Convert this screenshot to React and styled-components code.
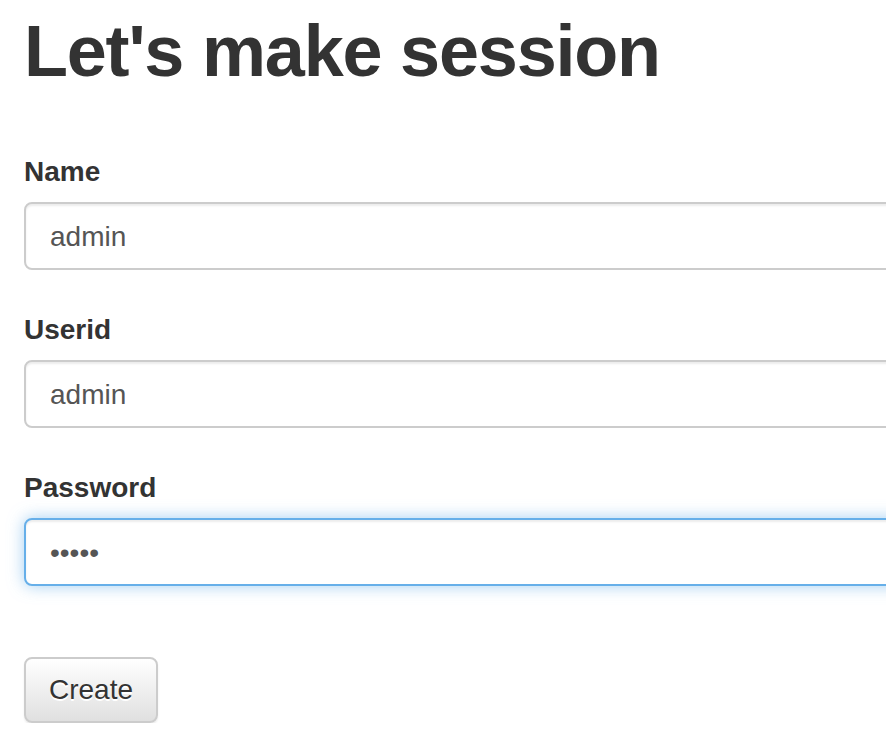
import React from "react";
import styled, { createGlobalStyle } from "styled-components";

const GlobalStyle = createGlobalStyle`
  html, body {
    margin: 0;
    padding: 0;
    background: #fff;
    overflow: hidden;
  }
  body {
    font-family: "Liberation Sans", Arial, sans-serif;
    color: #333;
  }
`;

const Page = styled.div`
  width: 1000px;
  padding: 0 24px;
`;

const Title = styled.h1`
  margin: 12px 0 61px;
  font-size: 72px;
  line-height: 79px;
  font-weight: bold;
  letter-spacing: -1.2px;
  color: #333;
`;

const Form = styled.form`
  display: flex;
  flex-direction: column;
`;

const Group = styled.div`
  display: flex;
  flex-direction: column;
  margin-bottom: 40px;
`;

const Label = styled.label`
  font-size: 28px;
  line-height: 40px;
  font-weight: bold;
  margin-bottom: 10px;
  color: #333;
`;

const Input = styled.input`
  box-sizing: border-box;
  width: 100%;
  height: 68px;
  padding: 13px 24px 11px;
  font-family: "Liberation Sans", Arial, sans-serif;
  font-size: 28px;
  line-height: 40px;
  color: #555;
  background: #fff;
  border: 2px solid ${(p) => (p.$focused ? "#66afe9" : "#ccc")};
  border-radius: 8px;
  outline: none;
  box-shadow: ${(p) =>
    p.$focused
      ? "inset 0 2px 2px rgba(0,0,0,.075), 0 0 16px rgba(102,175,233,.6)"
      : "inset 0 2px 2px rgba(0,0,0,.075)"};
`;

const Actions = styled.div`
  margin-top: 31px;
`;

const Button = styled.button`
  box-sizing: border-box;
  height: 66px;
  padding: 11px 23px;
  font-family: "Liberation Sans", Arial, sans-serif;
  font-size: 28px;
  line-height: 40px;
  color: #333;
  text-shadow: 0 2px 0 #fff;
  background: linear-gradient(to bottom, #fff 0, #e0e0e0 100%);
  border: 2px solid #ccc;
  border-radius: 8px;
  box-shadow: inset 0 2px 0 rgba(255, 255, 255, 0.15), 0 2px 2px rgba(0, 0, 0, 0.075);
  cursor: pointer;
`;

const fields = [
  { id: "name", label: "Name", type: "text", value: "admin" },
  { id: "userid", label: "Userid", type: "text", value: "admin" },
  { id: "password", label: "Password", type: "password", value: "admin", focused: true },
];

const App = () => {
  return (
    <Page>
      <GlobalStyle />
      <Title>Let's make session</Title>
      <Form onSubmit={(e) => e.preventDefault()}>
        {fields.map((f) => (
          <Group key={f.id}>
            <Label htmlFor={f.id}>{f.label}</Label>
            <Input id={f.id} type={f.type} defaultValue={f.value} $focused={f.focused} />
          </Group>
        ))}
        <Actions>
          <Button type="submit">Create</Button>
        </Actions>
      </Form>
    </Page>
  );
};

export default App;
